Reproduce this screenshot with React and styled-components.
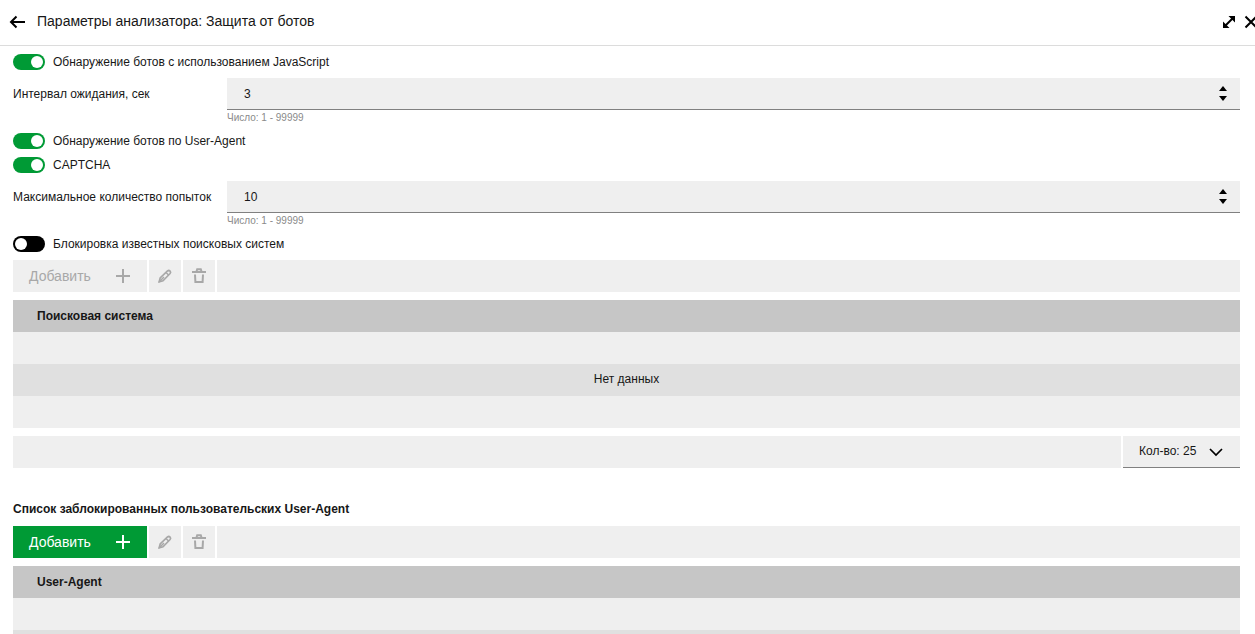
import React, { useState } from 'react';
import styled, { createGlobalStyle, css } from 'styled-components';

const GlobalStyle = createGlobalStyle`
  * {
    box-sizing: border-box;
  }
  body {
    margin: 0;
    overflow: hidden;
    background: #ffffff;
    color: #171717;
    font-family: 'Liberation Sans', Arial, sans-serif;
    font-size: 12px;
    line-height: 16px;
  }
  button,
  input,
  select {
    font: inherit;
    color: inherit;
    border: none;
    border-radius: 0;
    outline: none;
    padding: 0;
    margin: 0;
  }
`;

const Page = styled.div`
  height: 100vh;
  overflow: hidden;
`;

const Header = styled.header`
  display: flex;
  align-items: center;
  height: 46px;
  padding-left: 8px;
  padding-bottom: 2px;
  border-bottom: 1px solid #dcdcdc;
  overflow: hidden;
`;

const Title = styled.h1`
  flex: 1;
  margin: 0 0 0 9px;
  padding-bottom: 2px;
  font-size: 14px;
  font-weight: 400;
  line-height: 20px;
`;

const IconButton = styled.button`
  display: flex;
  flex: none;
  background: none;
  cursor: pointer;
`;

const HeaderActions = styled.div`
  display: flex;
  gap: 2px;
  margin-right: -6px;
`;

const Content = styled.main`
  padding: 4px 15px 0 13px;
`;

const ToggleRow = styled.label`
  display: flex;
  align-items: center;
  gap: 8px;
  height: 24px;
  cursor: pointer;
`;

const Switch = styled.input`
  appearance: none;
  display: flex;
  align-items: center;
  width: 32px;
  height: 16px;
  padding: 2px;
  border-radius: 8px;
  background: #000000;
  cursor: pointer;
  &::after {
    content: '';
    width: 12px;
    height: 12px;
    border-radius: 50%;
    background: #ffffff;
  }
  &:checked {
    justify-content: flex-end;
    background: #009a35;
  }
`;

const FieldRow = styled.div`
  display: grid;
  grid-template-columns: 214px 1fr;
  margin: 4px 0;
`;

const FieldLabel = styled.label`
  line-height: 32px;
`;

const NumberBox = styled.div`
  display: flex;
  align-items: center;
  height: 32px;
  padding: 0 12px 0 17px;
  background: #efefef;
  border-bottom: 1px solid #808080;
`;

const NumberInput = styled.input`
  flex: 1;
  background: none;
  appearance: textfield;
  &::-webkit-inner-spin-button,
  &::-webkit-outer-spin-button {
    appearance: none;
    margin: 0;
  }
`;

const Spinner = styled.div`
  display: flex;
  flex-direction: column;
  gap: 5px;
`;

const Hint = styled.div`
  grid-column: 2;
  height: 15px;
  font-size: 10px;
  line-height: 16px;
  color: #8a8a8a;
`;

const Toolbar = styled.div`
  display: flex;
  gap: 2px;
  height: 32px;
  margin: 4px 0 8px;
`;

const tile = css`
  display: flex;
  align-items: center;
  background: #efefef;
  color: #a8a8a8;
`;

const AddButton = styled.button`
  ${tile}
  justify-content: space-between;
  width: 134px;
  padding: 0 16px;
  font-size: 14px;
  &:enabled {
    background: #009a35;
    color: #ffffff;
    cursor: pointer;
  }
`;

const ToolButton = styled.button`
  ${tile}
  justify-content: center;
  width: 32px;
`;

const ToolbarFill = styled.div`
  flex: 1;
  background: #efefef;
`;

const Table = styled.table`
  width: 100%;
  border-collapse: collapse;
  table-layout: fixed;
  th,
  td {
    height: 32px;
    padding: 0 24px;
  }
  th {
    background: #c6c6c6;
    text-align: left;
    font-weight: 700;
  }
  td {
    background: #efefef;
    text-align: center;
  }
  tbody tr:nth-child(even) td {
    padding-bottom: 2px;
    background: #e0e0e0;
  }
`;

const Pager = styled.div`
  display: flex;
  gap: 2px;
  height: 32px;
  margin-top: 8px;
`;

const SelectBox = styled.div`
  display: grid;
  align-items: center;
  width: 117px;
  background: #efefef;
  border-bottom: 1px solid #808080;
  > * {
    grid-area: 1 / 1;
  }
  svg {
    justify-self: end;
    margin-right: 16px;
    pointer-events: none;
  }
`;

const PageSize = styled.select`
  appearance: none;
  width: 100%;
  height: 30px;
  padding: 0 0 2px 16px;
  background: none;
`;

const SectionTitle = styled.h2`
  margin: 32px 0 8px;
  font-size: 12px;
  font-weight: 700;
  line-height: 18px;
`;

const ArrowLeftIcon = () => (
  <svg width="20" height="20" viewBox="0 0 20 20" fill="none" stroke="#000" strokeWidth="2">
    <path d="M17 10H3.5M8.5 4.5L3 10l5.5 5.5" />
  </svg>
);

const ExpandIcon = () => (
  <svg width="20" height="20" viewBox="0 0 20 20">
    <path d="M6 14L14 6" stroke="#000" strokeWidth="2" />
    <path d="M9.500 4H16v6.500zM4 9.500V16h6.500z" fill="#000" />
  </svg>
);

const CloseIcon = () => (
  <svg width="20" height="20" viewBox="0 0 20 20" fill="none" stroke="#000" strokeWidth="2">
    <path d="M4.5 4.5l11 11M15.5 4.5l-11 11" />
  </svg>
);

const PlusIcon = () => (
  <svg width="16" height="16" viewBox="0 0 16 16" fill="none" stroke="currentColor" strokeWidth="2">
    <path d="M8 1v14M1 8h14" />
  </svg>
);

const PencilIcon = () => (
  <svg width="16" height="16" viewBox="0 0 16 16" fill="none" stroke="currentColor">
    <path d="M2.200 13.800l1-3.800 7.300-7q1.300-1 2.500 0 1.200 1.300.1 2.500l-7.100 7.300z" strokeWidth="1.700" />
    <path d="M9 4.500l2.800 2.800M2 14l5-5" strokeWidth="1.500" />
  </svg>
);

const TrashIcon = () => (
  <svg width="16" height="16" viewBox="0 0 16 16" fill="none" stroke="currentColor" strokeWidth="2">
    <path d="M1 4h14M5.500 3.500l.7-2.300h3.600l.7 2.300M4 6.500l.4 7.500h7.200l.4-7.500" />
  </svg>
);

const ChevronIcon = () => (
  <svg width="16" height="16" viewBox="0 0 16 16" fill="none" stroke="#000" strokeWidth="1.700">
    <path d="M2 5l6 6 6-6" />
  </svg>
);

function Toggle({ label, defaultChecked }) {
  return (
    <ToggleRow>
      <Switch type="checkbox" role="switch" defaultChecked={defaultChecked} />
      {label}
    </ToggleRow>
  );
}

function NumberField({ id, label, initial }) {
  const [value, setValue] = useState(initial);
  const step = (delta) => setValue(Math.min(99999, Math.max(1, Number(value) + delta)));

  return (
    <FieldRow>
      <FieldLabel htmlFor={id}>{label}</FieldLabel>
      <NumberBox>
        <NumberInput
          id={id}
          type="number"
          min="1"
          max="99999"
          value={value}
          onChange={(e) => setValue(e.target.value)}
        />
        <Spinner>
          <IconButton aria-label="Увеличить" onClick={() => step(1)}>
            <svg width="10" height="6" viewBox="0 0 10 6">
              <path d="M1 6l4-5 4 5z" />
            </svg>
          </IconButton>
          <IconButton aria-label="Уменьшить" onClick={() => step(-1)}>
            <svg width="10" height="6" viewBox="0 0 10 6">
              <path d="M1 0l4 5 4-5z" />
            </svg>
          </IconButton>
        </Spinner>
      </NumberBox>
      <Hint>Число: 1 - 99999</Hint>
    </FieldRow>
  );
}

function ListTable({ title, disabled, emptyText }) {
  return (
    <>
      <Toolbar>
        <AddButton disabled={disabled}>
          Добавить
          <PlusIcon />
        </AddButton>
        <ToolButton disabled aria-label="Изменить">
          <PencilIcon />
        </ToolButton>
        <ToolButton disabled aria-label="Удалить">
          <TrashIcon />
        </ToolButton>
        <ToolbarFill />
      </Toolbar>
      <Table>
        <thead>
          <tr>
            <th>{title}</th>
          </tr>
        </thead>
        <tbody>
          <tr>
            <td />
          </tr>
          <tr>
            <td>{emptyText}</td>
          </tr>
          <tr>
            <td />
          </tr>
        </tbody>
      </Table>
    </>
  );
}

function App() {
  return (
    <Page>
      <GlobalStyle />
      <Header>
        <IconButton aria-label="Назад">
          <ArrowLeftIcon />
        </IconButton>
        <Title>Параметры анализатора: Защита от ботов</Title>
        <HeaderActions>
          <IconButton aria-label="Развернуть">
            <ExpandIcon />
          </IconButton>
          <IconButton aria-label="Закрыть">
            <CloseIcon />
          </IconButton>
        </HeaderActions>
      </Header>
      <Content>
        <Toggle label="Обнаружение ботов с использованием JavaScript" defaultChecked />
        <NumberField id="interval" label="Интервал ожидания, сек" initial={3} />
        <Toggle label="Обнаружение ботов по User-Agent" defaultChecked />
        <Toggle label="CAPTCHA" defaultChecked />
        <NumberField id="attempts" label="Максимальное количество попыток" initial={10} />
        <Toggle label="Блокировка известных поисковых систем" />
        <ListTable title="Поисковая система" emptyText="Нет данных" disabled />
        <Pager>
          <ToolbarFill />
          <SelectBox>
            <PageSize aria-label="Количество строк" defaultValue="25">
              <option value="25">Кол-во: 25</option>
              <option value="50">Кол-во: 50</option>
              <option value="100">Кол-во: 100</option>
            </PageSize>
            <ChevronIcon />
          </SelectBox>
        </Pager>
        <SectionTitle>Список заблокированных пользовательских User-Agent</SectionTitle>
        <ListTable title="User-Agent" />
      </Content>
    </Page>
  );
}

export default App;
